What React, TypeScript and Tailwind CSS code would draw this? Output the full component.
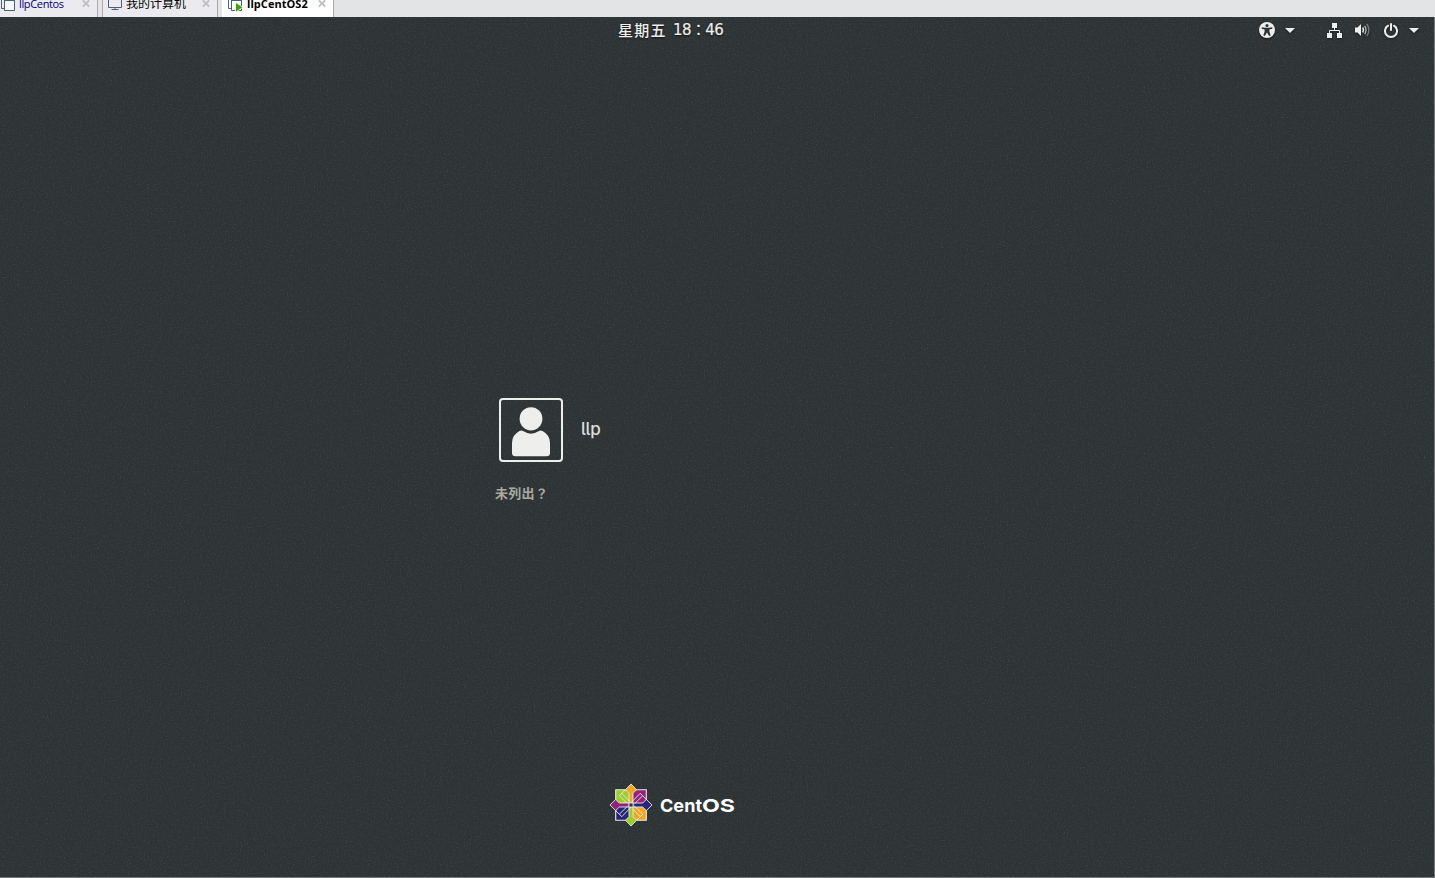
import type { ReactNode } from "react";

function CloseIcon() {
  return (
    <svg width="8" height="8" viewBox="0 0 8 8" className="block">
      <path d="M.8.3 7.2 6.7M7.2.3.8 6.7" stroke="#bfbfc1" strokeWidth="1.8" />
    </svg>
  );
}

function MachineIcon({ running = false }: { running?: boolean }) {
  return (
    <svg width="16" height="14" viewBox="0 0 16 14" className="block shrink-0">
      <path d="M1.5 0V8.5H4" fill="none" stroke="#526476" />
      <path d="M4.5 0V10.5H14.5V0" fill={running ? "#fff" : "#f4f6fa"} stroke="#466078" />
      <path d="M4 .5H15" stroke="#466078" />
      {running && <path d="M8.5 2.3 16 7.3 8.5 12.3Z" fill="#41a10b" stroke="#fff" strokeWidth=".8" />}
    </svg>
  );
}

function ComputerIcon() {
  return (
    <svg width="14" height="12" viewBox="0 0 14 12" className="block shrink-0">
      <path d="M.5 0V7.5H13.5V0M3.5 9.5H10.5M7 8V9" fill="none" stroke="#4b6074" />
    </svg>
  );
}

function AccessibilityIcon() {
  return (
    <svg width="16" height="16" viewBox="0 0 16 16" className="block">
      <circle cx="8" cy="8" r="8" fill="#eeeeec" />
      <circle cx="8" cy="3.5" r="1.6" fill="#2e3436" />
      <path d="M2.7 5.2 6.5 5.7H9.5L13.3 5.2V6.7L10.4 7.6V9.4L11.7 13.4 10.2 14 8 10.5 5.8 14 4.3 13.4 5.6 9.4V7.6L2.7 6.7Z" fill="#2e3436" />
    </svg>
  );
}

function Arrow() {
  return (
    <svg width="10" height="5" viewBox="0 0 10 5" className="block">
      <path d="M0 0H10L5 5Z" fill="#eeeeec" />
    </svg>
  );
}

function NetworkIcon() {
  return (
    <svg width="15" height="15" viewBox="0 0 15 15" className="block">
      <path d="M5 0H10V5H5ZM0 10H5V15H0ZM10 10H15V15H10Z" fill="#eeeeec" />
      <path d="M7.5 5V7.5M2.5 10V7.5H12.5V10" fill="none" stroke="#eeeeec" />
    </svg>
  );
}

function VolumeIcon() {
  return (
    <svg width="15" height="14" viewBox="0 0 15 14" className="block">
      <path d="M0 4.5H2.5L6 1V13L2.5 9.5H0Z" fill="#eeeeec" />
      <path d="M7.7 4.5Q9.3 7 7.7 9.5" fill="none" stroke="#eeeeec" strokeWidth="1.5" />
      <path d="M9.7 2.8Q12.3 7 9.7 11.2" fill="none" stroke="#b1b4b4" strokeWidth="1.4" />
      <path d="M11.8 1Q16 7 11.8 13" fill="none" stroke="#737879" strokeWidth="1.4" />
    </svg>
  );
}

function PowerIcon() {
  return (
    <svg width="14" height="15" viewBox="0 0 14 15" className="block">
      <path d="M4.1 2.7A6 6 0 1 0 9.9 2.7" fill="none" stroke="#eeeeec" strokeWidth="2" strokeLinecap="round" />
      <path d="M7 1V7" stroke="#eeeeec" strokeWidth="2" strokeLinecap="round" />
    </svg>
  );
}

function AvatarIcon() {
  return (
    <svg width="60" height="60" viewBox="0 0 60 60" className="block">
      <ellipse cx="30" cy="18.8" rx="11.4" ry="11.6" fill="#eeeeec" />
      <path d="M18.5 31Q20.5 30 22.5 31.3Q30 36 37.5 31.3Q39.5 30 41.5 31Q49 35 49 43V53Q49 56.3 45.5 56.3H14.5Q11 56.3 11 53V43Q11 35 18.5 31Z" fill="#eeeeec" />
    </svg>
  );
}

const quarters = [
  { turn: "rotate(0 22 22)", square: "#9ccd2a", point: "#efa724" },
  { turn: "rotate(90 22 22)", square: "#932279", point: "#262577" },
  { turn: "rotate(180 22 22)", square: "#efa724", point: "#9ccd2a" },
  { turn: "rotate(270 22 22)", square: "#262577", point: "#932279" },
];

function CentosMark() {
  return (
    <svg width="44" height="44" viewBox="0 0 44 44" className="block">
      {quarters.map((q) => (
        <path key={q.turn} transform={q.turn} d="M6.7 6.7H22V22H6.7Z" fill={q.square} stroke="#e9e9ef" strokeWidth="1.1" />
      ))}
      {quarters.map((q) => (
        <g key={q.turn} transform={q.turn} stroke="#e9e9ef" fill="none">
          <path d="M22 1 27.6 6.7 24 10.3V20H20V10.3L16.4 6.7Z" fill={q.point} strokeWidth=".9" />
          <path d="M16.4 6.7 10.3 12.8 19 21.2M12.8 10.3 20.6 18.4" strokeWidth=".9" />
        </g>
      ))}
      <path d="M20 20H24V24H20Z" fill="#30363a" stroke="#e9e9ef" strokeWidth=".8" />
    </svg>
  );
}

function Tab({ className, icon, children }: { className: string; icon: ReactNode; children: ReactNode }) {
  return (
    <div className={`flex h-[17px] shrink-0 items-start border-r border-[#a9a9ae] ${className}`}>
      {icon}
      {children}
      <span className="mr-[7px] ml-auto">
        <CloseIcon />
      </span>
    </div>
  );
}

export default function App() {
  return (
    <div className="flex h-[878px] w-[1435px] flex-col overflow-hidden bg-[#2e3436]">
      <nav className="flex h-[17px] shrink-0 gap-1 bg-[#e2e4e6] font-['DejaVu_Sans_Condensed','Noto_Sans_CJK_SC',sans-serif] text-[11px] leading-[14px]">
        <Tab className="w-[98px] bg-[#ebebef]" icon={<MachineIcon />}>
          <span className="-mt-[3px] ml-[3px] font-['Open_Sans',sans-serif] tracking-[-0.35px] text-[#000078]">llpCentos</span>
        </Tab>
        <Tab className="w-[116px] border-l border-l-[#a9a9ae] bg-[#ebebef] pl-[5px]" icon={<ComputerIcon />}>
          <span className="-mt-[3px] ml-1 text-[12px] text-black">我的计算机</span>
        </Tab>
        <Tab className="w-[112px] bg-white pl-[5px]" icon={<MachineIcon running />}>
          <span className="-mt-[3px] ml-1 font-['Open_Sans',sans-serif] font-bold tracking-[0.05px] text-black">llpCentOS2</span>
        </Tab>
      </nav>

      <main className="relative flex min-h-0 flex-1 flex-col overflow-hidden border-r border-b border-[#747879] font-['Noto_Sans','Noto_Sans_CJK_SC',sans-serif]">
        <svg className="pointer-events-none absolute inset-0 h-full w-full" aria-hidden="true">
          <filter id="grain" colorInterpolationFilters="sRGB">
            <feTurbulence type="fractalNoise" baseFrequency="0.7" numOctaves="2" seed="4" stitchTiles="stitch" />
            <feColorMatrix values="0 0 0 0 0.6  0 0 0 0 0.65  0 0 0 0 0.66  0.35 0 0 0 -0.175" />
          </filter>
          <rect width="100%" height="100%" filter="url(#grain)" />
        </svg>

        <header className="relative grid h-[26px] shrink-0 grid-cols-[618px_1fr_auto] items-center pr-[15px]">
          <span />
          <span className="flex items-center whitespace-pre text-[15px] leading-[26px] font-medium text-[#eeeeec] [text-shadow:0_1px_2px_#111]">
            <span className="w-[55px] tracking-[1.3px]">星期五</span>
            <span className="-mt-px font-['DejaVu_Sans','Noto_Sans_CJK_TC',sans-serif] text-[15px] font-normal tracking-[-0.6px] [-webkit-text-stroke:0.2px_#eeeeec]">18：46</span>
          </span>
          <div className="flex items-center drop-shadow-[0_1px_1px_#15191b]">
            <AccessibilityIcon />
            <span className="ml-[10px]"><Arrow /></span>
            <span className="ml-8"><NetworkIcon /></span>
            <span className="ml-[13px]"><VolumeIcon /></span>
            <span className="ml-[14px]"><PowerIcon /></span>
            <span className="ml-[11px]"><Arrow /></span>
          </div>
        </header>

        <section className="relative mt-[355px] ml-[495px] flex w-[360px] flex-col items-start">
          <button className="ml-1 flex items-center gap-[18px] text-left">
            <span className="block rounded-[4px] border-2 border-[#eeeeec]">
              <AvatarIcon />
            </span>
            <span className="-mt-[3px] font-['Inter',sans-serif] text-[17px] leading-6 font-medium tracking-[-0.3px] text-[#dededc] [font-feature-settings:'cv05']">llp</span>
          </button>
          <button className="mt-[21px] font-['Noto_Sans_CJK_TC',sans-serif] text-[13px] leading-5 font-bold tracking-[0.3px] text-[#aaaaa0]">未列出？</button>
        </section>

        <footer className="relative mt-auto mb-[50px] ml-[608.5px] flex items-center gap-[7px]">
          <CentosMark />
          <svg width="78" height="24" viewBox="0 0 78 24" role="img" aria-label="CentOS">
            <text y="19" fill="#fff" fontFamily="Inter, sans-serif" fontSize="18" fontWeight="700">
              <tspan x="0" textLength="42" lengthAdjust="spacingAndGlyphs">Cent</tspan>
              <tspan x="42" textLength="33" lengthAdjust="spacingAndGlyphs">OS</tspan>
            </text>
          </svg>
        </footer>
      </main>
    </div>
  );
}
